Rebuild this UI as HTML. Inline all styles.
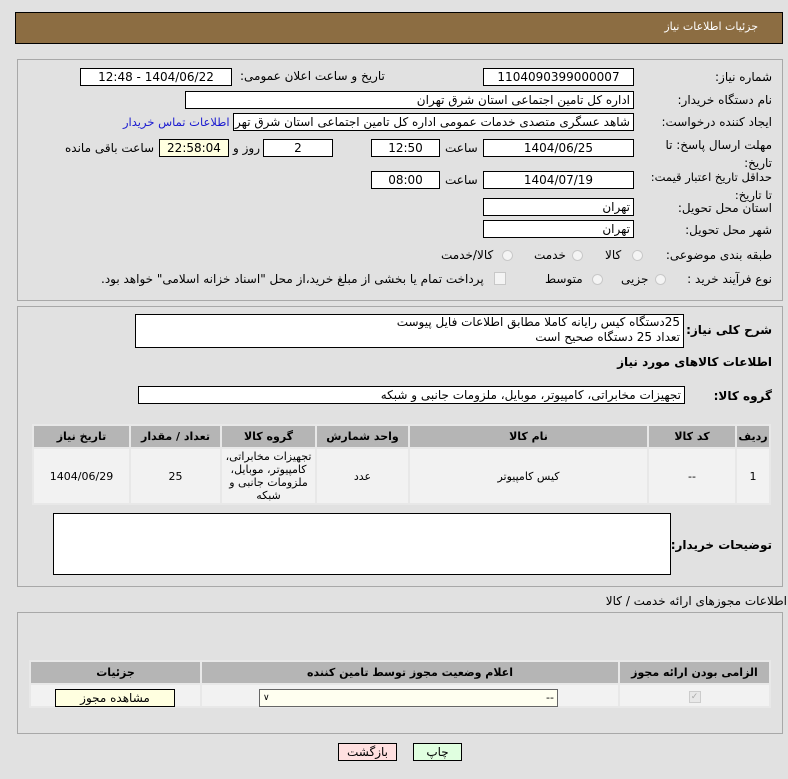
<!DOCTYPE html>
<html><head><meta charset="utf-8"><style>
body{margin:0;width:788px;height:779px;background:#e1e1e1;font-family:"DejaVu Sans","Liberation Sans",sans-serif;font-size:12px;position:relative;overflow:hidden;direction:rtl}
.a{position:absolute}
.box{position:absolute;background:#fff;border:1px solid #000;box-sizing:border-box;font-size:12px;line-height:16px;padding:0 3px;white-space:nowrap;overflow:hidden}
.c{text-align:center}
.lbl{position:absolute;white-space:nowrap;font-size:12px}
.panel{position:absolute;border:1px solid #a8a8a8;box-sizing:border-box}
table{border-collapse:collapse}
td,th{border:2px solid #e8e8e8;font-size:11px;text-align:center}
th{background:#b5b5b5;font-weight:bold}
td{background:#f2f2f2}
.rad{position:absolute;width:11px;height:11px;border:1px solid #c8c8c8;border-radius:50%;background:#f4f4f4;box-sizing:border-box}
</style></head><body>
<div class="a" style="left:15px;top:12px;width:768px;height:32px;background:#8c6d42;border:1px solid #000;box-sizing:border-box"></div>
<div class="lbl" style="right:30px;top:20px;color:#fff;font-size:11px">جزئیات اطلاعات نیاز</div>

<div class="panel" style="left:17px;top:59px;width:766px;height:242px"></div>
<div class="lbl" style="right:16px;top:70px">شماره نیاز:</div>
<div class="box c" style="left:483px;top:68px;width:151px;height:18px">1104090399000007</div>
<div class="lbl" style="left:240px;top:69px">تاریخ و ساعت اعلان عمومی:</div>
<div class="box c" style="left:80px;top:68px;width:152px;height:18px">1404/06/22 - 12:48</div>
<div class="lbl" style="right:16px;top:93px">نام دستگاه خریدار:</div>
<div class="box" style="left:185px;top:91px;width:449px;height:18px">اداره کل تامین اجتماعی استان شرق تهران</div>
<div class="lbl" style="right:16px;top:115px">ایجاد کننده درخواست:</div>
<div class="box" style="left:233px;top:113px;width:401px;height:18px">شاهد عسگری متصدی خدمات عمومی اداره کل تامین اجتماعی استان شرق تهران</div>
<div class="lbl" style="left:123px;top:115px;color:#1a1ad0;font-size:11.5px">اطلاعات تماس خریدار</div>
<div class="lbl" style="right:16px;top:136px;line-height:18px">مهلت ارسال پاسخ: تا<br>تاریخ:</div>
<div class="box c" style="left:483px;top:139px;width:151px;height:18px">1404/06/25</div>
<div class="lbl" style="left:445px;top:141px">ساعت</div>
<div class="box c" style="left:371px;top:139px;width:69px;height:18px">12:50</div>
<div class="box c" style="left:263px;top:139px;width:70px;height:18px">2</div>
<div class="lbl" style="left:233px;top:141px">روز و</div>
<div class="box c" style="left:159px;top:139px;width:70px;height:18px;background:#ffffe0">22:58:04</div>
<div class="lbl" style="left:65px;top:141px">ساعت باقی مانده</div>
<div class="lbl" style="right:16px;top:168px;line-height:18px;font-size:11.5px">حداقل تاریخ اعتبار قیمت:<br>تا تاریخ:</div>
<div class="box c" style="left:483px;top:171px;width:151px;height:18px">1404/07/19</div>
<div class="lbl" style="left:445px;top:173px">ساعت</div>
<div class="box c" style="left:371px;top:171px;width:69px;height:18px">08:00</div>
<div class="lbl" style="right:16px;top:201px">استان محل تحویل:</div>
<div class="box" style="left:483px;top:198px;width:151px;height:18px">تهران</div>
<div class="lbl" style="right:16px;top:223px">شهر محل تحویل:</div>
<div class="box" style="left:483px;top:220px;width:151px;height:18px">تهران</div>
<div class="lbl" style="right:16px;top:248px">طبقه بندی موضوعی:</div>
<div class="rad" style="left:632px;top:250px"></div><div class="lbl" style="left:605px;top:248px">کالا</div>
<div class="rad" style="left:572px;top:250px"></div><div class="lbl" style="left:534px;top:248px">خدمت</div>
<div class="rad" style="left:502px;top:250px"></div><div class="lbl" style="left:441px;top:248px">کالا/خدمت</div>
<div class="lbl" style="right:16px;top:272px">نوع فرآیند خرید :</div>
<div class="rad" style="left:655px;top:274px"></div><div class="lbl" style="left:621px;top:272px">جزیی</div>
<div class="rad" style="left:592px;top:274px"></div><div class="lbl" style="left:545px;top:272px">متوسط</div>
<div class="a" style="left:494px;top:272px;width:10px;height:11px;border:1px solid #c8c8c8;background:#f4f4f4"></div>
<div class="lbl" style="left:101px;top:272px">پرداخت تمام یا بخشی از مبلغ خرید،از محل "اسناد خزانه اسلامی" خواهد بود.</div>

<div class="panel" style="left:17px;top:306px;width:766px;height:281px"></div>
<div class="lbl" style="right:16px;top:323px;font-weight:bold">شرح کلی نیاز:</div>
<div class="box" style="left:135px;top:314px;width:549px;height:34px;white-space:normal;line-height:15px">25دستگاه کیس رایانه کاملا مطابق اطلاعات فایل پیوست<br>تعداد 25 دستگاه صحیح است</div>
<div class="lbl" style="right:16px;top:355px;font-weight:bold">اطلاعات کالاهای مورد نیاز</div>
<div class="lbl" style="right:16px;top:389px;font-weight:bold">گروه کالا:</div>
<div class="box" style="left:138px;top:386px;width:547px;height:18px">تجهیزات مخابراتی، کامپیوتر، موبایل، ملزومات جانبی و شبکه</div>
<table class="a" style="left:32px;top:424px;width:739px;border:1px solid #bbb">
<tr style="height:23px"><th style="width:30px">ردیف</th><th style="width:84px">کد کالا</th><th>نام کالا</th><th style="width:89px">واحد شمارش</th><th style="width:91px">گروه کالا</th><th style="width:87px">تعداد / مقدار</th><th style="width:93px">تاریخ نیاز</th></tr>
<tr style="height:54px"><td>1</td><td>--</td><td>کیس کامپیوتر</td><td>عدد</td><td style="line-height:13px">تجهیزات مخابراتی، کامپیوتر، موبایل، ملزومات جانبی و شبکه</td><td>25</td><td>1404/06/29</td></tr>
</table>
<div class="lbl" style="right:16px;top:538px;font-weight:bold">توضیحات خریدار:</div>
<div class="box" style="left:53px;top:513px;width:618px;height:62px"></div>

<div class="lbl" style="right:1px;top:594px">اطلاعات مجوزهای ارائه خدمت / کالا</div>
<div class="panel" style="left:17px;top:612px;width:766px;height:122px"></div>
<table class="a" style="left:29px;top:660px;width:742px;border:1px solid #bbb">
<tr style="height:23px"><th style="width:147px">الزامی بودن ارائه مجوز</th><th>اعلام وضعیت مجوز توسط تامین کننده</th><th style="width:167px">جزئیات</th></tr>
<tr style="height:23px"><td><span style="display:inline-block;width:10px;height:10px;border:1px solid #ccc;background:#e8e8e8;color:#aaa;font-size:9px;line-height:10px">✓</span></td><td></td><td></td></tr>
</table>
<div class="box" style="left:259px;top:689px;width:299px;height:18px;background:#fffff0;border-color:#666;font-size:11px">--<span style="position:absolute;left:3px;top:0;font-size:9px">&#8744;</span></div>
<div class="box c" style="left:55px;top:689px;width:120px;height:18px;background:#ffffe0">مشاهده مجوز</div>

<div class="box c" style="left:338px;top:743px;width:59px;height:18px;background:#ffe0e0">بازگشت</div>
<div class="box c" style="left:413px;top:743px;width:49px;height:18px;background:#e0ffe0">چاپ</div>
</body></html>
